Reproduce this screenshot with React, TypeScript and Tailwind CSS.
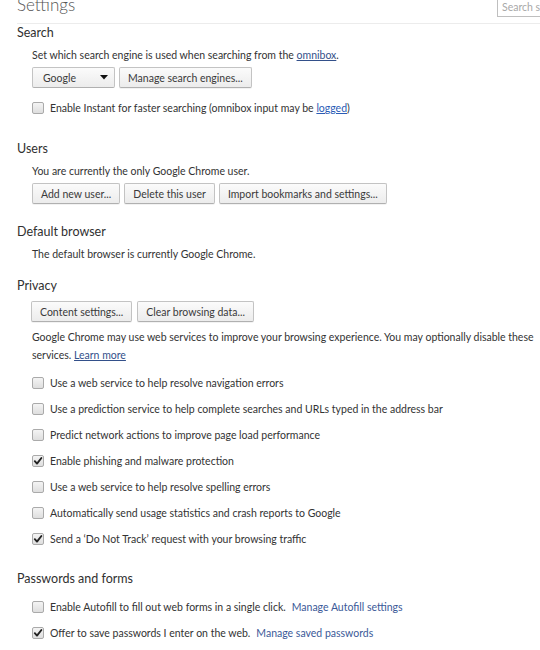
import React from "react";

function Btn({ children }: { children: React.ReactNode }) {
  return (
    <div className="h-[21px] px-[8px] flex items-center border border-[#c3c3c3] border-b-[#b0b0b0] rounded-[2px] bg-gradient-to-b from-[#fbfbfb] to-[#ececec] text-[#3a3a3a] whitespace-nowrap shadow-[0_1px_0_rgba(0,0,0,0.05)]">
      {children}
    </div>
  );
}

function Check({ checked, children }: { checked?: boolean; children: React.ReactNode }) {
  return (
    <div className="flex items-center h-[18px] whitespace-nowrap">
      <div className="w-[12px] h-[12px] mr-[6px] border border-[#aaaaaa] rounded-[2px] bg-gradient-to-b from-[#f4f4f4] to-[#dedede] flex items-center justify-center shrink-0">
        {checked && (
          <svg width="10" height="10" viewBox="0 0 10 10">
            <path d="M1.8 5.2 L4 7.6 L8.4 2" fill="none" stroke="#222" strokeWidth="1.9" strokeLinecap="round" strokeLinejoin="round" />
          </svg>
        )}
      </div>
      <span>{children}</span>
    </div>
  );
}

function Heading({ children, className }: { children: React.ReactNode; className?: string }) {
  return <div className={"ml-[17px] h-[16px] leading-[16px] text-[12.5px] text-[#303030] " + (className ?? "")}>{children}</div>;
}

export default function App() {
  return (
    <div
      className="w-[540px] h-[650px] overflow-hidden bg-white text-[#333333] text-[10.5px] leading-[18px]"
      style={{ fontFamily: "Lato, 'Open Sans', sans-serif" }}
    >
      {/* header */}
      <div className="ml-[17px] h-[24px] border-b border-[#ececec] flex items-start">
        <div className="flex-1 mt-[-6px] text-[17px] leading-[22px] font-light text-[#555555]">Settings</div>
        <div className="w-[43px] h-[19px] mt-[-2px] border border-r-0 border-[#bfbfbf] pl-[4px] text-[10.5px] leading-[17px] text-[#a8a8a8] whitespace-nowrap overflow-hidden">
          Search settings
        </div>
      </div>

      {/* Search */}
      <Heading className="mt-[1px]">Search</Heading>
      <div className="ml-[32px]">
        <div className="mt-[5px]">
          Set which search engine is used when searching from the{" "}
          <span className="underline text-[#33508a]">omnibox</span>.
        </div>
        <div className="mt-[3px] flex gap-[4px]">
          <div className="w-[83px] h-[21px] pl-[10px] pr-[6px] flex items-center justify-between border border-[#c3c3c3] border-b-[#b0b0b0] rounded-[2px] bg-gradient-to-b from-[#fbfbfb] to-[#ececec] text-[#3a3a3a]">
            <span>Google</span>
            <svg width="8" height="5" viewBox="0 0 8 5">
              <path d="M0 0 L8 0 L4 4.5 Z" fill="#111" />
            </svg>
          </div>
          <Btn>Manage search engines...</Btn>
        </div>
        <div className="mt-[11px]">
          <Check>
            Enable Instant for faster searching (omnibox input may be{" "}
            <span className="underline text-[#2a5bb5]">logged</span>)
          </Check>
        </div>
      </div>

      {/* Users */}
      <Heading className="mt-[24px]">Users</Heading>
      <div className="ml-[32px]">
        <div className="mt-[5px]">You are currently the only Google Chrome user.</div>
        <div className="mt-[3px] flex gap-[4px]">
          <Btn>Add new user...</Btn>
          <Btn>Delete this user</Btn>
          <Btn>Import bookmarks and settings...</Btn>
        </div>
      </div>

      {/* Default browser */}
      <Heading className="mt-[20px]">Default browser</Heading>
      <div className="ml-[32px]">
        <div className="mt-[5px]">The default browser is currently Google Chrome.</div>
      </div>

      {/* Privacy */}
      <Heading className="mt-[15px]">Privacy</Heading>
      <div className="ml-[32px] mr-[6px]">
        <div className="mt-[7px] flex gap-[5px] ml-[-1px]">
          <Btn>Content settings...</Btn>
          <Btn>Clear browsing data...</Btn>
        </div>
        <div className="mt-[6px]">
          Google Chrome may use web services to improve your browsing experience. You may optionally disable these
          services. <span className="underline text-[#33508a]">Learn more</span>
        </div>
        <div className="mt-[10px] flex flex-col gap-[8px]">
          <Check>Use a web service to help resolve navigation errors</Check>
          <Check>Use a prediction service to help complete searches and URLs typed in the address bar</Check>
          <Check>Predict network actions to improve page load performance</Check>
          <Check checked>Enable phishing and malware protection</Check>
          <Check>Use a web service to help resolve spelling errors</Check>
          <Check>Automatically send usage statistics and crash reports to Google</Check>
          <Check checked>Send a ‘Do Not Track’ request with your browsing traffic</Check>
        </div>
      </div>

      {/* Passwords and forms */}
      <Heading className="mt-[23px]">Passwords and forms</Heading>
      <div className="ml-[32px]">
        <div className="mt-[11px] flex flex-col gap-[8px]">
          <Check>
            Enable Autofill to fill out web forms in a single click.
            <span className="ml-[6px] text-[#3b5998]">Manage Autofill settings</span>
          </Check>
          <Check checked>
            Offer to save passwords I enter on the web.
            <span className="ml-[6px] text-[#3b5998]">Manage saved passwords</span>
          </Check>
        </div>
      </div>
    </div>
  );
}
